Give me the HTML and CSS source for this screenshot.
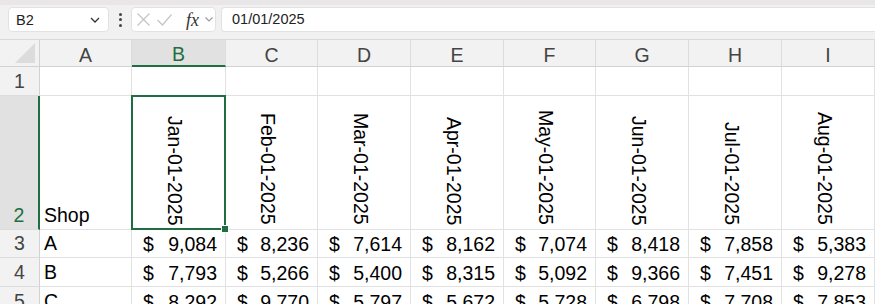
FILE: index.html
```html
<!DOCTYPE html>
<html lang="en">
<head>
    <meta charset="UTF-8">
    <title>Sheet</title>
    <link rel="stylesheet" href="styles.css">
</head>
<body>
<div class="toolbar">
    <div class="namebox">
        <span>B2</span>
        <svg class="chev" width="10" height="6" viewBox="0 0 10 6"><path d="M1 1l4 4 4-4" fill="none" stroke="#333" stroke-width="1.3"/></svg>
    </div>
    <div class="dots"><i></i><i></i><i></i></div>
    <div class="fbtns">
        <svg class="ic-x" width="13" height="13" viewBox="0 0 13 13"><path d="M0.5 0.5l12 12M12.5 0.5l-12 12" stroke="#c4c4c4" stroke-width="1.2"/></svg>
        <svg class="ic-ok" width="15" height="12" viewBox="0 0 15 12"><path d="M0.5 6l5 5L14.5 0.5" fill="none" stroke="#c4c4c4" stroke-width="1.2"/></svg>
        <span class="fx">fx</span>
        <svg class="ic-dd" width="8" height="5" viewBox="0 0 8 5"><path d="M0.5 0.5l3.5 3.5L7.5 0.5" fill="none" stroke="#999" stroke-width="1.1"/></svg>
    </div>
    <div class="finput">01/01/2025</div>
</div>

<div class="grid">
    <div class="corner"><span class="tri"></span></div>
    <div class="ch">A</div>
    <div class="ch sel">B</div>
    <div class="ch">C</div>
    <div class="ch">D</div>
    <div class="ch">E</div>
    <div class="ch">F</div>
    <div class="ch">G</div>
    <div class="ch">H</div>
    <div class="ch">I</div>

    <div class="rh">1</div>
    <div class="c"></div><div class="c"></div><div class="c"></div><div class="c"></div><div class="c"></div>
    <div class="c"></div><div class="c"></div><div class="c"></div><div class="c"></div>

    <div class="rh sel">2</div>
    <div class="c">Shop</div>
    <div class="c rot active"><span>Jan-01-2025</span></div>
    <div class="c rot"><span>Feb-01-2025</span></div>
    <div class="c rot"><span>Mar-01-2025</span></div>
    <div class="c rot"><span>Apr-01-2025</span></div>
    <div class="c rot"><span>May-01-2025</span></div>
    <div class="c rot"><span>Jun-01-2025</span></div>
    <div class="c rot"><span>Jul-01-2025</span></div>
    <div class="c rot"><span>Aug-01-2025</span></div>

    <div class="rh">3</div>
    <div class="c">A</div>
    <div class="c acc"><span>$</span><span>9,084</span></div>
    <div class="c acc"><span>$</span><span>8,236</span></div>
    <div class="c acc"><span>$</span><span>7,614</span></div>
    <div class="c acc"><span>$</span><span>8,162</span></div>
    <div class="c acc"><span>$</span><span>7,074</span></div>
    <div class="c acc"><span>$</span><span>8,418</span></div>
    <div class="c acc"><span>$</span><span>7,858</span></div>
    <div class="c acc"><span>$</span><span>5,383</span></div>

    <div class="rh">4</div>
    <div class="c">B</div>
    <div class="c acc"><span>$</span><span>7,793</span></div>
    <div class="c acc"><span>$</span><span>5,266</span></div>
    <div class="c acc"><span>$</span><span>5,400</span></div>
    <div class="c acc"><span>$</span><span>8,315</span></div>
    <div class="c acc"><span>$</span><span>5,092</span></div>
    <div class="c acc"><span>$</span><span>9,366</span></div>
    <div class="c acc"><span>$</span><span>7,451</span></div>
    <div class="c acc"><span>$</span><span>9,278</span></div>

    <div class="rh">5</div>
    <div class="c">C</div>
    <div class="c acc"><span>$</span><span>8,292</span></div>
    <div class="c acc"><span>$</span><span>9,770</span></div>
    <div class="c acc"><span>$</span><span>5,797</span></div>
    <div class="c acc"><span>$</span><span>5,672</span></div>
    <div class="c acc"><span>$</span><span>5,728</span></div>
    <div class="c acc"><span>$</span><span>6,798</span></div>
    <div class="c acc"><span>$</span><span>7,708</span></div>
    <div class="c acc"><span>$</span><span>7,853</span></div>
</div>
</body>
</html>
```

FILE: styles.css
```css
* {
    margin: 0;
    padding: 0;
    box-sizing: border-box;
}

body {
    width: 875px;
    height: 304px;
    overflow: hidden;
    background-color: #fff;
    font-family: "Liberation Sans", Arial, sans-serif;
    color: #000;
}

/* formula bar */
.toolbar {
    height: 40px;
    display: flex;
    align-items: flex-start;
    padding: 2px 0 0 8px;
    background-color: #f1f1f1;
    border-top: 5px solid #e8e6e6;
    border-bottom: 1px solid #dadada;
}

.namebox {
    width: 101px;
    height: 25px;
    display: flex;
    align-items: center;
    justify-content: space-between;
    padding: 0 8px 0 7px;
    background-color: #fff;
    border: 1px solid #e2e2e2;
    border-radius: 4px;
    font-size: 14.5px;
    color: #222;
}

.dots {
    width: 22px;
    height: 25px;
    display: flex;
    flex-direction: column;
    align-items: center;
    justify-content: center;
    gap: 2.5px;
}

.dots i {
    width: 3px;
    height: 3px;
    border-radius: 50%;
    background-color: #444;
}

.fbtns {
    width: 85px;
    height: 25px;
    display: flex;
    align-items: center;
    padding-left: 5px;
    background-color: #fff;
    border: 1px solid #e2e2e2;
    border-radius: 4px;
}

.ic-ok {
    margin-left: 7px;
}

.fbtns .fx {
    font-family: "Liberation Serif", serif;
    font-style: italic;
    font-size: 18px;
    color: #333;
    margin-left: 14px;
    line-height: 1;
}

.ic-dd {
    margin-left: 6px;
}

.finput {
    flex: 1;
    height: 25px;
    margin-left: 5px;
    padding-left: 10px;
    background-color: #fff;
    border: 1px solid #e2e2e2;
    border-right: none;
    border-radius: 4px 0 0 4px;
    font-size: 14.5px;
    line-height: 23px;
    color: #222;
}

/* sheet */
.grid {
    display: grid;
    grid-template-columns: 40px 92px 94px 92px 93px 93px 92px 93px 93px 93px;
    grid-template-rows: 27px 29px 134px 28px 29px 29px;
    font-size: 19.5px;
    line-height: 22px;
}

.grid > div {
    border-right: 1px solid #e1e1e1;
    border-bottom: 1px solid #e1e1e1;
}

.corner {
    background-color: #f2f2f2;
    border-color: #d2d2d2 !important;
    display: flex;
    justify-content: flex-end;
    align-items: flex-end;
    padding: 0 4px 3px 0;
}

.tri {
    width: 0;
    height: 0;
    border-left: 20px solid transparent;
    border-bottom: 20px solid #dcdcdc;
}

.ch {
    background-color: #f2f2f2;
    border-bottom-color: #d2d2d2 !important;
    border-right-color: #dcdcdc !important;
    display: flex;
    justify-content: center;
    align-items: flex-end;
    color: #444;
}

.ch.sel {
    background-color: #e1e1e1;
    color: #1e6e42;
    border-bottom: 2px solid #1e6e42 !important;
}

.rh {
    background-color: #f2f2f2;
    border-right-color: #d2d2d2 !important;
    border-bottom-color: #dcdcdc !important;
    display: flex;
    justify-content: center;
    align-items: flex-end;
    padding-bottom: 3px;
    color: #444;
}

.rh.sel {
    background-color: #e1e1e1;
    color: #1e6e42;
    border-right: 2px solid #1e6e42 !important;
}

.c {
    display: flex;
    align-items: flex-end;
    padding: 0 4px 3px 4px;
    white-space: nowrap;
}

.acc {
    justify-content: space-between;
    padding: 0 8px 2px 11px;
}

.rot {
    justify-content: center;
    padding: 0 7px 4px 0;
}

.rot span {
    writing-mode: vertical-rl;
}

.active {
    position: relative;
}

.active::after {
    content: "";
    position: absolute;
    left: -1px;
    top: -1px;
    right: -1px;
    bottom: -1px;
    border: 2px solid #1e6e42;
}

.active::before {
    content: "";
    position: absolute;
    right: -4px;
    bottom: -4px;
    width: 6px;
    height: 6px;
    background-color: #1e6e42;
    border: 1px solid #fff;
    z-index: 2;
}
```
